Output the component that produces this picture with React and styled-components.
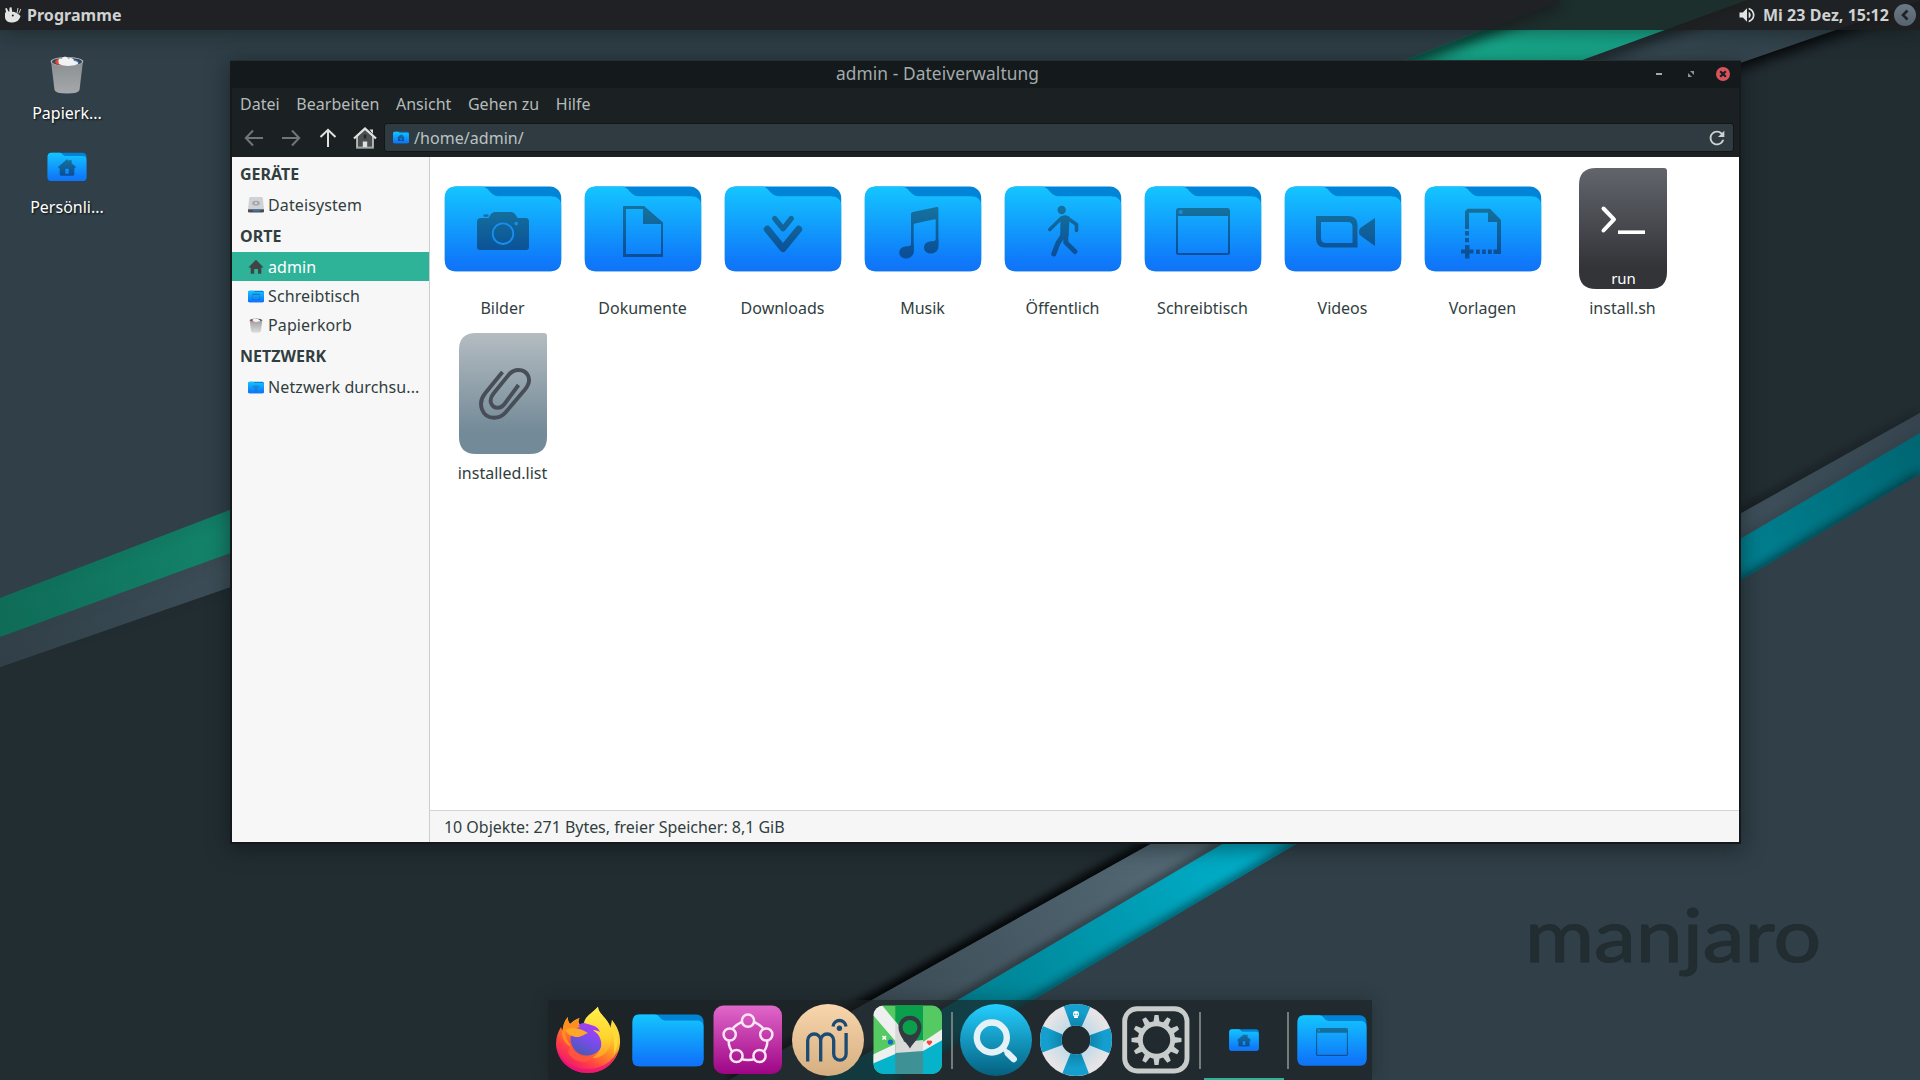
import React from "react";
import styled, { createGlobalStyle } from "styled-components";
import { MdVolumeUp, MdRefresh } from "react-icons/md";

const GlobalStyle = createGlobalStyle`
  * { box-sizing: border-box; }
  html, body { margin: 0; padding: 0; overflow: hidden; background: #303f48; }
  body { font-family: "Noto Sans", "Open Sans", sans-serif; font-size: 16px; line-height: 22px; }
  svg { display: block; flex: none; }
`;

/* ---------- layout ---------- */

const Screen = styled.div`
  position: relative;
  width: 1920px;
  height: 1080px;
  overflow: hidden;
  display: grid;
  grid-template-rows: 30px 1fr 80px;
`;

const Backdrop = styled.svg`
  position: absolute;
  inset: 0;
`;

const Panel = styled.header`
  position: relative;
  display: flex;
  align-items: center;
  justify-content: space-between;
  padding: 0 4px 0 4px;
  background: rgba(29, 30, 31, 0.88);
  box-shadow: 0 2px 22px rgba(10, 20, 20, 0.5);
  color: #cfd2d1;
  font-weight: 700;
  letter-spacing: 0.05px;
`;

const PanelGroup = styled.div`
  display: flex;
  align-items: center;
  gap: ${(p) => p.$gap}px;
`;

const PanelButton = styled.div`
  width: 22px;
  height: 22px;
  border-radius: 50%;
  margin-left: -1px;
  background: linear-gradient(#6c7986, #56636e);
  display: grid;
  place-items: center;
`;

const DesktopIcons = styled.nav`
  position: relative;
  display: flex;
  flex-direction: column;
  gap: 15px;
  width: 134px;
  padding-top: 26px;
`;

const DesktopItem = styled.div`
  display: flex;
  flex-direction: column;
  align-items: center;
  gap: ${(p) => p.$gap}px;
  color: #fff;
  text-shadow: 1px 1px 2px rgba(0, 0, 0, 0.8);
  height: 78px;
  padding-top: ${(p) => p.$top || 0}px;
`;

const Window = styled.section`
  position: absolute;
  left: 230px;
  top: 60px;
  width: 1511px;
  height: 784px;
  border: 2px solid #15191b;
  border-top: 1px solid #272e30;
  border-radius: 2px 2px 0 0;
  background: #1b2123;
  box-shadow: 0 4px 22px rgba(8, 14, 14, 0.5);
  display: grid;
  grid-template-rows: 27px 69px 1fr;
`;

const TitleBar = styled.div`
  display: grid;
  grid-template-columns: 96px 1fr 96px;
  align-items: start;
  background: #14191b;
  color: #a3abab;
  font-size: 17.33px;
  letter-spacing: 0.09px;
  line-height: 24px;
  text-align: center;
`;

const Title = styled.span`
  grid-column: 1 / 3;
  padding-right: 0;
`;

const WindowButtons = styled.div`
  display: grid;
  grid-template-columns: repeat(3, 32px);
  height: 26px;
  place-items: center;
`;

const WindowHead = styled.div`
  display: grid;
  grid-template-rows: 34px 30px;
`;

const MenuBar = styled.div`
  display: flex;
  align-items: center;
  gap: 16.500px;
  padding: 0 0 2px 8px;
  color: #b5bbba;
  letter-spacing: 0.04px;
`;

const ToolBar = styled.div`
  display: flex;
  align-items: center;
  padding: 0 5px 0 3px;
  height: 31px;
`;

const ToolButton = styled.button`
  width: 37px;
  height: 30px;
  border: 0;
  padding: 0;
  background: none;
  display: grid;
  place-items: center;
  color: ${(p) => (p.$dim ? "#6f7675" : "#dfe2e1")};
`;

const PathEntry = styled.div`
  flex: 1;
  height: 29px;
  display: flex;
  align-items: center;
  gap: 5px;
  padding: 0 5px 0 8px;
  margin-left: 1px;
  border: 1px solid #111617;
  border-radius: 3px;
  background: #2f3b40;
  color: #bcc2c0;
  letter-spacing: 0.05px;
`;

const PathText = styled.span`
  flex: 1;
`;

const WindowBody = styled.div`
  display: grid;
  grid-template-columns: 198px 1fr;
  grid-template-rows: minmax(0, 1fr);
  background: #fff;
`;

const Sidebar = styled.aside`
  background: #f7f7f7;
  border-right: 1px solid #cbcecd;
  color: #313e40;
`;

const SideHeading = styled.div`
  height: 33px;
  padding: 6px 0 0 8px;
  font-weight: 700;
`;

const SideRow = styled.div`
  height: 29px;
  display: flex;
  align-items: center;
  gap: 4px;
  padding: 1px 0 0 16px;
  white-space: nowrap;
  letter-spacing: 0.11px;
  background: ${(p) => (p.$active ? "#2eb398" : "transparent")};
  color: ${(p) => (p.$active ? "#fff" : "inherit")};
`;

const Content = styled.div`
  display: grid;
  grid-template-rows: 1fr 32px;
`;

const FileGrid = styled.div`
  display: grid;
  grid-template-columns: repeat(9, 140px);
  grid-auto-rows: 155px;
  gap: 10px 0;
  align-content: start;
  padding: 7px 0 0 3px;
  color: #313e40;
`;

const FileItem = styled.div`
  display: flex;
  flex-direction: column;
  align-items: center;
  gap: 5px;
`;

const FileName = styled.span`
  margin-right: 1px;
`;

const StatusBar = styled.footer`
  border-top: 1px solid #d3d5d5;
  background: #f6f6f6;
  padding: 5px 14px;
  color: #313e40;
  letter-spacing: -0.03px;
`;

const Dock = styled.div`
  position: relative;
  justify-self: start;
  margin-left: 548px;
  height: 80px;
  display: flex;
  background: rgba(27, 33, 34, 0.68);
  box-shadow: 0 0 16px rgba(15, 20, 20, 0.3);
`;

const DockItem = styled.div`
  width: 80px;
  height: 80px;
  display: grid;
  place-items: center;
  border-bottom: ${(p) => (p.$running ? "2px solid #2eb398" : "0")};
  padding-top: ${(p) => (p.$running ? "2px" : "0")};
`;

const DockSeparator = styled.div`
  width: 2px;
  height: 57px;
  margin: 12px 3px 0;
  background: #757c7c;
`;

/* ---------- wallpaper ---------- */

function Wallpaper() {
  return (
    <Backdrop width="1920" height="1080" viewBox="0 0 1920 1080">
      <defs>
        <linearGradient id="wGreen" gradientUnits="userSpaceOnUse" x1="0" y1="600" x2="1600" y2="0">
          <stop offset="0" stopColor="#0f6c57" />
          <stop offset=".15" stopColor="#14866d" />
          <stop offset=".55" stopColor="#1cc39f" />
          <stop offset="1" stopColor="#18a88b" />
        </linearGradient>
        <linearGradient id="wGreyA" gradientUnits="userSpaceOnUse" x1="0" y1="650" x2="1900" y2="0">
          <stop offset="0" stopColor="#303f48" />
          <stop offset=".14" stopColor="#3f505a" />
          <stop offset=".5" stopColor="#566c77" />
          <stop offset=".85" stopColor="#394b55" />
          <stop offset="1" stopColor="#303f48" />
        </linearGradient>
        <linearGradient id="wGreyB" gradientUnits="userSpaceOnUse" x1="800" y1="1050" x2="1920" y2="420">
          <stop offset="0" stopColor="#34434c" />
          <stop offset=".35" stopColor="#566c78" />
          <stop offset=".82" stopColor="#40515c" />
          <stop offset="1" stopColor="#35444e" />
        </linearGradient>
        <linearGradient id="wTeal" gradientUnits="userSpaceOnUse" x1="860" y1="1080" x2="1920" y2="450">
          <stop offset="0" stopColor="#006d7a" />
          <stop offset=".37" stopColor="#00b1cc" />
          <stop offset=".82" stopColor="#008293" />
          <stop offset="1" stopColor="#006672" />
        </linearGradient>
        <linearGradient id="fadeTop" x1="0" x2="1" y1="0" y2="0">
          <stop offset="0" stopColor="#000" stopOpacity="0" />
          <stop offset=".6" stopColor="#000" stopOpacity=".4" />
          <stop offset="1" stopColor="#000" stopOpacity="1" />
        </linearGradient>
        <linearGradient id="fadeLow" gradientUnits="userSpaceOnUse" x1="720" x2="1920" y1="0" y2="0">
          <stop offset="0" stopColor="#000" stopOpacity="1" />
          <stop offset=".4" stopColor="#000" stopOpacity=".85" />
          <stop offset=".85" stopColor="#000" stopOpacity=".3" />
          <stop offset="1" stopColor="#000" stopOpacity=".15" />
        </linearGradient>
        <filter id="soft" filterUnits="userSpaceOnUse" x="-100" y="-100" width="2200" height="1300">
          <feGaussianBlur stdDeviation="7" />
        </filter>
        <filter id="softer" filterUnits="userSpaceOnUse" x="-100" y="-100" width="2200" height="1300">
          <feGaussianBlur stdDeviation="4" />
        </filter>
        <clipPath id="cGreen"><path d="M0 598 1561 0H1747L0 637Z" /></clipPath>
        <clipPath id="cGreyA"><path d="M0 637 1747 0H1920L0 667Z" /></clipPath>
        <clipPath id="cDark"><path d="M0 667 1920 0V413L729 1080H0Z" /></clipPath>
        <clipPath id="cGreyB"><path d="M729 1080 1920 413V433L822 1080Z" /></clipPath>
        <clipPath id="cTeal"><path d="M822 1080 1920 433V474L898 1080Z" /></clipPath>
      </defs>
      <rect width="1920" height="1080" fill="#303f48" />
      <path d="M0 667 1920 0V413L729 1080H0Z" fill="#222d32" />
      <g clipPath="url(#cDark)">
        <path d="M0 662 1920 -5" stroke="url(#fadeTop)" strokeWidth="22" filter="url(#soft)" />
        <path d="M729 1080 1920 413" stroke="url(#fadeLow)" strokeWidth="12" filter="url(#softer)" />
      </g>
      <path d="M0 637 1747 0H1922L0 667Z" fill="url(#wGreyA)" />
      <g clipPath="url(#cGreyA)">
        <path d="M0 637 1747 0" stroke="url(#fadeTop)" strokeWidth="12" opacity=".7" filter="url(#soft)" />
      </g>
      <path d="M0 598 1561 0H1747L0 637Z" fill="url(#wGreen)" />
      <g clipPath="url(#cGreen)">
        <path d="M0 598 1561 0" stroke="url(#fadeTop)" strokeWidth="13" opacity=".9" filter="url(#soft)" />
      </g>
      <path d="M729 1080 1920 413V434L822 1080Z" fill="url(#wGreyB)" />
      <g clipPath="url(#cGreyB)">
        <path d="M822 1080 1920 433" stroke="url(#fadeLow)" strokeWidth="5" opacity=".7" filter="url(#softer)" />
      </g>
      <path d="M822 1080 1920 433V474L898 1080Z" fill="url(#wTeal)" />
      <g clipPath="url(#cTeal)">
        <path d="M898 1080 1920 474" stroke="#00282d" strokeWidth="6" opacity=".8" filter="url(#softer)" />
      </g>
      <text
        x="1525"
        y="962"
        textLength="296"
        lengthAdjust="spacingAndGlyphs"
        fontFamily="Lato, sans-serif"
        fontSize="74"
        fill="#222d32"
        stroke="#222d32"
        strokeWidth="1.200"
        strokeLinejoin="round"
      >
        manjaro
      </text>
    </Backdrop>
  );
}

/* ---------- shared gradients ---------- */

function Gradients() {
  return (
    <svg width="0" height="0" style={{ position: "absolute" }}>
      <defs>
        <linearGradient id="fFront" gradientUnits="userSpaceOnUse" x1="0" y1="22" x2="0" y2="108">
          <stop offset="0" stopColor="#14c6ff" />
          <stop offset=".85" stopColor="#0f7bfa" />
          <stop offset="1" stopColor="#1073f6" />
        </linearGradient>
        <linearGradient id="fGlyph" gradientUnits="userSpaceOnUse" x1="0" y1="46" x2="0" y2="90">
          <stop offset="0" stopColor="#14709d" />
          <stop offset="1" stopColor="#0b4f97" />
        </linearGradient>
        <linearGradient id="gRun" x1="0" y1="0" x2="0" y2="1">
          <stop offset="0" stopColor="#63656d" />
          <stop offset=".82" stopColor="#323438" />
        </linearGradient>
        <linearGradient id="gList" x1="0" y1="0" x2="0" y2="1">
          <stop offset="0" stopColor="#b4bcc1" />
          <stop offset=".82" stopColor="#738a98" />
        </linearGradient>
        <linearGradient id="gTrash" x1="0" y1="0" x2="0" y2="1">
          <stop offset="0" stopColor="#8b8e90" />
          <stop offset="1" stopColor="#a6a9ab" />
        </linearGradient>
        <linearGradient id="gTrashLight" x1="0" y1="0" x2="0" y2="1">
          <stop offset="0" stopColor="#9d9d9d" />
          <stop offset="1" stopColor="#dedede" />
        </linearGradient>
        <linearGradient id="gFox" gradientUnits="userSpaceOnUse" x1="58" y1="8" x2="18" y2="66">
          <stop offset="0" stopColor="#fff04b" />
          <stop offset=".3" stopColor="#ffc72e" />
          <stop offset=".52" stopColor="#ff8a22" />
          <stop offset=".76" stopColor="#ff4046" />
          <stop offset="1" stopColor="#ee1273" />
        </linearGradient>
        <linearGradient id="gFlame" x1="0" y1="0" x2="0" y2="1">
          <stop offset="0" stopColor="#fff04b" />
          <stop offset=".6" stopColor="#ffd42c" />
          <stop offset="1" stopColor="#ff9a2a" />
        </linearGradient>
        <linearGradient id="gGlobe" x1=".8" y1="0" x2=".3" y2="1">
          <stop offset="0" stopColor="#b53af2" />
          <stop offset=".5" stopColor="#7c4bef" />
          <stop offset="1" stopColor="#4a5ab0" />
        </linearGradient>
        <linearGradient id="gPink" gradientUnits="userSpaceOnUse" x1="0" y1="1" x2="0" y2="70">
          <stop offset="0" stopColor="#e168ca" />
          <stop offset="1" stopColor="#9e0585" />
        </linearGradient>
        <linearGradient id="gScore" x1="0" y1="0" x2="0" y2="1">
          <stop offset="0" stopColor="#f8d5ac" />
          <stop offset="1" stopColor="#d5af80" />
        </linearGradient>
        <linearGradient id="gFind" x1="0" y1="0" x2="0" y2="1">
          <stop offset="0" stopColor="#24cfff" />
          <stop offset="1" stopColor="#04607f" />
        </linearGradient>
        <radialGradient id="gBuoy" gradientUnits="userSpaceOnUse" cx="36" cy="36" r="36">
          <stop offset=".4" stopColor="#0d86ae" />
          <stop offset=".8" stopColor="#159fce" />
        </radialGradient>
        <radialGradient id="gBuoyW" gradientUnits="userSpaceOnUse" cx="36" cy="36" r="36">
          <stop offset=".4" stopColor="#c3dbe8" />
          <stop offset=".9" stopColor="#e6e4e6" />
        </radialGradient>
        <clipPath id="cMap"><rect x="1.5" y="1.5" width="68.5" height="68.5" rx="10" /></clipPath>
      </defs>
    </svg>
  );
}

/* ---------- folder icons ---------- */

const glyphs = {
  pictures: (
    <g>
      <path d="M38 58q0-4 4-4h7.500q3-6 6-6h17q3 0 6 6H87q3 0 3 4V83q0 3-3 3H41q-3 0-3-3ZM44.500 50.500h5v2.200h-5Z" />
      <circle cx="64" cy="69.700" r="10.300" fill="none" stroke="#1590f2" strokeWidth="1.800" />
      <circle cx="77.200" cy="59.600" r="1.800" fill="#1590f2" />
    </g>
  ),
  documents: <path fillRule="evenodd" d="M44 42H65L84 58.500V93H44ZM47 45V90H82V60H64V45Z" />,
  downloads: (
    <g fill="none" stroke="url(#fGlyph)" strokeLinecap="round" strokeLinejoin="round">
      <path strokeWidth="5.200" d="M55.700 54.500 64 64.800 72.300 54.500" />
      <path strokeWidth="7" d="M48.300 65.300 64 84.500 79.700 65.300" />
    </g>
  ),
  music: (
    <g>
      <path d="M52 50q0-1.700 1.800-2L78 43q1.400-.2 1.400 1.200V81h-2.700V56q0-1-1.200-.8L56 59.500q-1.300.4-1.300 1.600V88H52Z" />
      <path d="M54.700 80V89C53 94 48 95.500 44 94c-5-2-5-9 0-11 3-1.200 6 0 8-2ZM79.400 74.500V84c-1.700 5-6.700 6.500-10.700 5-5-2-5-9 0-11 3-1.200 6 0 8-2Z" />
    </g>
  ),
  public: (
    <g fill="none" stroke="url(#fGlyph)" strokeLinecap="round" strokeLinejoin="round">
      <circle cx="62.700" cy="46" r="4.200" fill="url(#fGlyph)" stroke="none" />
      <path strokeWidth="3.600" d="M62 54.500 50.800 65.500M69 54.500 77.500 60.500V66.500" />
      <path fill="url(#fGlyph)" strokeWidth="3" d="M63 53.500q3-1.500 6 0l-.8 18h-5.500Z" />
      <path strokeWidth="5" d="M65 70 59 79 54.800 90" />
      <path strokeWidth="5" d="M66.800 70V78.500L76 87.500" />
    </g>
  ),
  desktop: (
    <g>
      <path fillRule="evenodd" d="M40 44H88q3 0 3 3V88.500q0 2.500-3 2.500H40q-3 0-3-2.500V47q0-3 3-3ZM39 52V89H89V52Z" />
      <circle cx="41.700" cy="48" r="2" fill="#1590e0" />
    </g>
  ),
  videos: (
    <g>
      <path fillRule="evenodd" d="M37 52H69q9.500 0 9.500 9V83.500H46q-9 0-9-9ZM42 58V74q0 5 5 5H73.500V63q0-5-5-5Z" />
      <path d="M96 54V82L82 72q-2-1.500-2-3V67q0-2 2-3.500Z" />
    </g>
  ),
  templates: (
    <path d="M48.500 44.700H71L82 56V90H78V58H69V48.700H50V65H46V47.200ZM46 67h4v4.600h-4ZM46 74h4v4.300h-4ZM46 81h4.500v4.500h4v4h-4V94.500H46V89.500H42v-4h4ZM57 85.500h3.800V90H57ZM63 85.500h3.800V90H63ZM69 85.500h3.800V90H69ZM74.500 85.500H78V90h-3.500Z" />
  ),
  home: (
    <path
      fillRule="evenodd"
      d="M64 42 70 47V44.500H78V53.500L91 65 88 68.500H86V87q0 4-4 4H46q-4 0-4-4V68.500H40L37 65ZM59 70V85H69V70Z"
    />
  ),
  network: (
    <g fill="none" stroke="url(#fGlyph)" strokeWidth="4">
      <path d="M40 60Q64 40 88 60M47 69Q64 54 81 69M55 78Q64 71 73 78" />
      <circle cx="64" cy="86" r="2" />
    </g>
  ),
};

function FolderIcon({ size = 128, box = "0 0 128 128", height, glyph }) {
  return (
    <svg width={size} height={height || size} viewBox={box}>
      <rect x="5.800" y="22.500" width="116.400" height="84.800" rx="11.500" fill="#0084d8" />
      <path
        d="M5.800 34Q5.800 22.500 17 22.500H42C51 22.500 50 32.300 61 32.300H111Q122.200 32.300 122.200 42V96Q122.200 107.300 111 107.300H17Q5.800 107.300 5.800 96Z"
        fill="url(#fFront)"
      />
      <g fill="url(#fGlyph)">{glyph ? glyphs[glyph] : null}</g>
    </svg>
  );
}

function ScriptIcon() {
  return (
    <svg width="128" height="128" viewBox="0 0 128 128">
      <path d="M37 4H105q3 0 3 3V108q0 17-17 17H37q-17 0-17-17V21Q20 4 37 4Z" fill="url(#gRun)" />
      <path d="M44.500 44.500 55 55.400 44.500 66.500" fill="none" stroke="#fff" strokeWidth="4" strokeLinecap="round" strokeLinejoin="round" />
      <path d="M59 68.200H86" stroke="#fff" strokeWidth="3.600" />
      <text x="64.500" y="119.500" textAnchor="middle" fontSize="15" fill="#fff">run</text>
    </svg>
  );
}

function ListIcon() {
  return (
    <svg width="128" height="128" viewBox="0 0 128 128">
      <path d="M37 4H105q3 0 3 3V108q0 17-17 17H37q-17 0-17-17V21Q20 4 37 4Z" fill="url(#gList)" />
      <path
        d="M63.500 43 46 64.500C38 74.500 43 88.800 55 88.800 60 88.800 63.500 87 66.500 83.500L86 60.500C94.500 50 88 41 79.500 41 75.500 41 72.500 42.500 70 45.500L54.500 64.500C48.500 72 53 78.800 59 78.800 61.500 78.800 63.500 77.500 65.500 75L79.500 56"
        fill="none"
        stroke="#474e57"
        strokeWidth="3.900"
      />
    </svg>
  );
}

function TrashIcon({ width, height, light }) {
  return (
    <svg width={width} height={height} viewBox="0 0 34 38">
      <path d="M1 5 4.500 34Q5.500 37.500 17 37.500 28.500 37.500 29.500 34L33 5Z" fill={light ? "url(#gTrashLight)" : "url(#gTrash)"} />
      <ellipse cx="17" cy="5.500" rx="16.300" ry="4.600" fill="#aeb1b3" />
      <ellipse cx="17" cy="5.700" rx="15" ry="3.800" fill="#3c444a" />
      <path d="M5 6.500Q5 3 10 3L12 9Q7 9 5 6.500Z" fill="#e8453c" />
      <path d="M23 3Q29 4 29 7.500L22 9Z" fill="#3a7fc4" />
      <path d="M9 8C8 4 8 2 12 2.500 13 0 17 0 18 2.500 22 1 24 3 24 5 28 5 29 8 27 8.500 22 10.500 13 10.500 9 8Z" fill="#f2f2f2" />
    </svg>
  );
}

function DiskIcon() {
  return (
    <svg width="16" height="16" viewBox="0 0 16 16">
      <path d="M2.500 0H13.500Q14.600 0 14.800 1.200L16 12.500H0L1.200 1.200Q1.400 0 2.500 0Z" fill="#cfd1d4" />
      <path d="M0 12.300H16V14.200Q16 15.500 14.700 15.500H1.300Q0 15.500 0 14.200Z" fill="#4a4f57" />
      <path d="M5 13.800h7" stroke="#2f7fc0" strokeWidth="1.200" />
      <ellipse cx="8" cy="6.200" rx="3.700" ry="2.400" fill="#a3a6aa" />
      <ellipse cx="8" cy="6.200" rx="1.400" ry=".9" fill="#dcdddf" />
    </svg>
  );
}

function HouseSolid() {
  return (
    <svg width="16" height="16" viewBox="0 0 16 16">
      <path d="M8 .8 15.600 8.500H13.300V14.800H10V10H6.200V14.800H2.700V8.500H.4Z" fill="#404446" />
    </svg>
  );
}

/* ---------- panel and toolbar icons ---------- */

function MouseLogo() {
  return (
    <svg width="18" height="16" viewBox="0 0 18 16" fill="#e2e4e3">
      <path d="M1 9Q.5 6 2 4.500L1.200 1.500 2.800 1 4.200 4 5.200 5 5.600 .5 7.500 .3 8.300 5Q10 4.500 11.500 5.500 14.500 6.500 16.500 9 15.500 14.500 9 15.500 2.500 16 1 11Z" />
      <path d="M13 6 14 1M14.800 6.500 16.800 2" stroke="#e2e4e3" strokeWidth=".9" />
      <circle cx="8.800" cy="8.500" r="1" fill="#222" />
    </svg>
  );
}

function Arrow({ turn }) {
  return (
    <svg width="20" height="20" viewBox="0 0 20 20">
      <path
        transform={`rotate(${turn} 10 10)`}
        d="M9 2.500 1.800 10 9 17.500M1.800 10H19"
        fill="none"
        stroke="currentColor"
        strokeWidth="2"
      />
    </svg>
  );
}

function HomeLarge() {
  return (
    <svg width="24" height="24" viewBox="0 0 24 24">
      <path d="M4 10 12 3 20 10V21.500H4Z" fill="#4b5151" stroke="#d5d8d7" strokeWidth="1.500" />
      <path d="M1 12.500 12 2.500 23 12.500" fill="none" stroke="#dfe2e1" strokeWidth="2.200" />
      <path d="M16.500 3.500H20V8Z" fill="#dfe2e1" />
      <path d="M9.800 15.500H14.200V22H9.800Z" fill="#dfe2e1" />
      <path d="M10.800 8.500h2.400v4h-2.400Z" fill="#23282a" />
      <path d="M3 22H21" stroke="#8b9090" strokeWidth="1.400" />
    </svg>
  );
}

/* ---------- dock icons ---------- */

const DockSvg = ({ children }) => (
  <svg width="72" height="72" viewBox="0 0 72 72">{children}</svg>
);

function Firefox() {
  return (
    <DockSvg>
      <path
        d="M16 13C15.500 16 16.500 18 18 20 21 17 24 15 27.500 14 26 17 26.500 19 28 21L34 24 33 18C36 12 41 8 46 2.700 46 10 58 15 58.500 27 60.500 23 60.500 20 59.800 16 66 23 68.500 31 68 39 67 56 53 69 36 69 18 69 4.500 56 4 40 4 33 6 28 9 23 9.500 25 10 26 10.500 26.500 11 21 13 16 16 13Z"
        fill="url(#gFox)"
      />
      <path d="M4.500 42C8 58 22 66 38 65 53 64 63 54 66 46 63 60 51 69 36 69 19 69 6 57 4.500 42Z" fill="#e9107c" opacity=".75" />
      <circle cx="35" cy="35" r="16.500" fill="url(#gGlobe)" />
      <path d="M46 2.700C46 12 60 15 60 32 60 46 50 55 40 54 49 49 51 41 48 34 46 29 43 28 41 26 44 26 46 27 48 28 46 22 40 21 32 19 33 12 40 9 46 2.700Z" fill="url(#gFlame)" />
      <path d="M60 16C68 26 67 42 62 50 63 40 62 30 58 25Z" fill="#ffd93a" />
      <path d="M16 13C15.500 16 16.500 18 18 20L27.500 14C25 19 26 21 28 23 22 25 16 25 13 27 14 36 18 40 20 43 14 42 8 32 10.500 26.500 11 21 13 16 16 13Z" fill="#ff8e1f" />
      <path d="M13 26C20 22.500 27 23.500 36 29 31 31 29 33 25 33 21 33 16 31 13 26Z" fill="#ffa726" />
      <path d="M19 38C20 50 32 55 42 52 36 62 20 58 16 48Z" fill="#ff5a3c" opacity=".8" />
    </DockSvg>
  );
}

function Nodes() {
  const pts = [[36, 16.7], [54.3, 30.5], [47.5, 52], [24.5, 52], [17.7, 30.5]];
  return (
    <DockSvg>
      <rect x="1.500" y="1.500" width="68.500" height="68.500" rx="10" fill="url(#gPink)" />
      <g stroke="#fbe6f6" strokeWidth="2.500">
        <circle cx="36" cy="36.600" r="19.400" fill="none" />
        {pts.map(([x, y]) => (
          <circle key={x} cx={x} cy={y} r="6.100" fill="url(#gPink)" />
        ))}
      </g>
    </DockSvg>
  );
}

function Score() {
  return (
    <DockSvg>
      <circle cx="36" cy="36" r="36" fill="url(#gScore)" />
      <g fill="none" stroke="#1b4a72" strokeWidth="3.300">
        <path d="M15.700 57.500V36.500a6.500 6.500 0 0 1 13 0V57.500M28.700 36.500a6.500 6.500 0 0 1 13 0V50a6.200 6.200 0 0 0 12.400 0V29" />
        <path d="M41 22.500C42 14.500 53 14.500 54 22.500" />
      </g>
      <circle cx="47.400" cy="24.300" r="2.700" fill="#1b4a72" />
    </DockSvg>
  );
}

function MapIcon() {
  return (
    <DockSvg>
      <g clipPath="url(#cMap)">
        <rect width="72" height="72" fill="#55ca62" />
        <rect x="23.300" width="27.700" height="72" fill="#0a9f4a" />
        <path d="M0 55 23 46 51 44 72 32V72H0Z" fill="#07b3cb" />
        <path d="M23.300 46 51 44V72H23.300Z" fill="#3e9296" />
        <path d="M0 4 5 0H9L27 22 31 42H24L23.300 37 1 11Z" fill="#eeefef" />
        <path d="M0 51 23.300 40V50L0 60Z" fill="#eeefef" />
        <path d="M51 38 72 24V35L51 47Z" fill="#eeefef" />
        <path d="M23.300 17 27 22 32 38 51 36V47L23.300 49Z" fill="#d8d9d8" />
      </g>
      <path fillRule="evenodd" d="M38 11.800C44.500 11.800 49.500 16.500 49.500 23.500 49.500 32 41 39 38 44.500 35 39 26.500 32 26.500 23.500 26.500 16.500 31.500 11.800 38 11.800ZM38 16.200a7.300 7.300 0 1 0 .01 0Z" fill="#343a41" />
      <circle cx="38" cy="23.500" r="7.300" fill="#0a9f4a" />
      <path d="M10.500 32 14 35.500M14 32 10.500 35.500" stroke="#fff" strokeWidth="1.700" />
      <circle cx="18.400" cy="38" r="2.600" fill="#1466d8" />
      <path d="M57.400 41.500 54.600 38.500Q54.500 35.800 57.400 36.800 60.300 35.800 60.200 38.500Z" fill="#f3433f" />
    </DockSvg>
  );
}

function Finder() {
  return (
    <DockSvg>
      <circle cx="36" cy="36" r="36" fill="url(#gFind)" />
      <circle cx="31.800" cy="33.500" r="15" fill="none" stroke="#e4f2f8" strokeWidth="6.400" />
      <path d="M43.500 44.500 53.500 55" stroke="#e4f2f8" strokeWidth="4.500" />
      <path d="M48 49.500 53.600 55" stroke="#e4f2f8" strokeWidth="6.600" strokeLinecap="round" />
    </DockSvg>
  );
}

function Lifebuoy() {
  return (
    <DockSvg>
      <circle cx="36" cy="36" r="25.200" fill="none" stroke="url(#gBuoyW)" strokeWidth="21.600" />
      <circle
        cx="36"
        cy="36"
        r="25.200"
        fill="none"
        stroke="url(#gBuoy)"
        strokeWidth="21.600"
        strokeDasharray="19 20.584"
        strokeDashoffset="9.500"
      />
      <circle cx="36" cy="10" r="3" fill="#fff" />
      <path d="M34 12.500h4v1.500h-4Z" fill="#fff" />
      <circle cx="34.700" cy="10.300" r=".8" fill="#159fce" />
      <circle cx="37.300" cy="10.300" r=".8" fill="#159fce" />
    </DockSvg>
  );
}

function Settings() {
  return (
    <DockSvg>
      <rect x="4.700" y="4.700" width="62.300" height="62.300" rx="12.500" fill="none" stroke="#c8cccb" strokeWidth="4.900" />
      <circle cx="36.500" cy="36" r="16.200" fill="none" stroke="#c8cccb" strokeWidth="5" />
      {Array.from({ length: 12 }, (_, i) => (
        <path key={i} d="M33.200 19.500 34.500 11H38.500L39.800 19.500Z" transform={`rotate(${i * 30} 36.500 36)`} fill="#c8cccb" />
      ))}
    </DockSvg>
  );
}

/* ---------- data ---------- */

const MINI = "4 20 120 90";
const mini = (glyph) => <FolderIcon size={16} height={13} box="5.500 20 117 90" glyph={glyph} />;

const menus = ["Datei", "Bearbeiten", "Ansicht", "Gehen zu", "Hilfe"];

const places = [
  { title: "GERÄTE", rows: [{ label: "Dateisystem", icon: <DiskIcon /> }] },
  {
    title: "ORTE",
    rows: [
      { label: "admin", icon: <HouseSolid />, active: true },
      { label: "Schreibtisch", icon: mini("desktop") },
      { label: "Papierkorb", icon: <TrashIcon width={16} height={15} light /> },
    ],
  },
  { title: "NETZWERK", rows: [{ label: "Netzwerk durchsu...", icon: mini("network") }] },
];

const files = [
  ["Bilder", <FolderIcon glyph="pictures" />],
  ["Dokumente", <FolderIcon glyph="documents" />],
  ["Downloads", <FolderIcon glyph="downloads" />],
  ["Musik", <FolderIcon glyph="music" />],
  ["Öffentlich", <FolderIcon glyph="public" />],
  ["Schreibtisch", <FolderIcon glyph="desktop" />],
  ["Videos", <FolderIcon glyph="videos" />],
  ["Vorlagen", <FolderIcon glyph="templates" />],
  ["install.sh", <ScriptIcon />],
  ["installed.list", <ListIcon />],
];

export default function App() {
  return (
    <Screen>
      <GlobalStyle />
      <Gradients />
      <Wallpaper />

      <Panel>
        <PanelGroup $gap={5}>
          <MouseLogo />
          <span>Programme</span>
        </PanelGroup>
        <PanelGroup $gap={6}>
          <MdVolumeUp size={20} color="#e2e4e3" />
          <span>Mi 23 Dez, 15:12</span>
          <PanelButton>
            <svg width="10" height="12" viewBox="0 0 10 12">
              <path d="M7.500 1.500 3 6 7.500 10.500" fill="none" stroke="#1d2225" strokeWidth="2.600" />
            </svg>
          </PanelButton>
        </PanelGroup>
      </Panel>

      <DesktopIcons>
        <DesktopItem $gap={8}>
          <TrashIcon width={34} height={38} />
          <span>Papierk...</span>
        </DesktopItem>
        <DesktopItem $gap={14} $top={3}>
          <FolderIcon size={40} height={30} box={MINI} glyph="home" />
          <span>Persönli...</span>
        </DesktopItem>
      </DesktopIcons>

      <Window>
        <TitleBar>
          <Title>admin - Dateiverwaltung</Title>
          <WindowButtons>
            <svg width="8" height="8" viewBox="0 0 8 8">
              <path d="M1 4H7" stroke="#a3abab" strokeWidth="2" />
            </svg>
            <svg width="8" height="8" viewBox="0 0 8 8" fill="#8d9595">
              <path d="M3 1H7V5ZM1 3V7H5Z" />
            </svg>
            <svg width="14" height="14" viewBox="0 0 14 14">
              <circle cx="7" cy="7" r="7" fill="#d8545c" />
              <path d="M4.200 4.200 9.800 9.800M9.800 4.200 4.200 9.800" stroke="#1b1f21" strokeWidth="2.200" />
            </svg>
          </WindowButtons>
        </TitleBar>

        <WindowHead>
          <MenuBar>
            {menus.map((m) => (
              <span key={m}>{m}</span>
            ))}
          </MenuBar>
          <ToolBar>
            <ToolButton $dim><Arrow turn={0} /></ToolButton>
            <ToolButton $dim><Arrow turn={180} /></ToolButton>
            <ToolButton><Arrow turn={90} /></ToolButton>
            <ToolButton><HomeLarge /></ToolButton>
            <PathEntry>
              {mini("home")}
              <PathText>/home/admin/</PathText>
              <MdRefresh size={22} color="#cfd3d1" />
            </PathEntry>
          </ToolBar>
        </WindowHead>

        <WindowBody>
          <Sidebar>
            {places.map((group) => (
              <React.Fragment key={group.title}>
                <SideHeading>{group.title}</SideHeading>
                {group.rows.map((row) => (
                  <SideRow key={row.label} $active={row.active}>
                    {row.icon}
                    <span>{row.label}</span>
                  </SideRow>
                ))}
              </React.Fragment>
            ))}
          </Sidebar>
          <Content>
            <FileGrid>
              {files.map(([name, icon]) => (
                <FileItem key={name}>
                  {icon}
                  <FileName>{name}</FileName>
                </FileItem>
              ))}
            </FileGrid>
            <StatusBar>10 Objekte: 271 Bytes, freier Speicher: 8,1 GiB</StatusBar>
          </Content>
        </WindowBody>
      </Window>

      <Dock>
        <DockItem><Firefox /></DockItem>
        <DockItem><FolderIcon size={72} height={53} box="5 22 118 86" /></DockItem>
        <DockItem><Nodes /></DockItem>
        <DockItem><Score /></DockItem>
        <DockItem><MapIcon /></DockItem>
        <DockSeparator />
        <DockItem><Finder /></DockItem>
        <DockItem><Lifebuoy /></DockItem>
        <DockItem><Settings /></DockItem>
        <DockSeparator />
        <DockItem $running><FolderIcon size={30} height={22} box="5 22 118 86" glyph="home" /></DockItem>
        <DockSeparator />
        <DockItem><FolderIcon size={70} height={51} box="5 22 118 86" glyph="desktop" /></DockItem>
      </Dock>
    </Screen>
  );
}
